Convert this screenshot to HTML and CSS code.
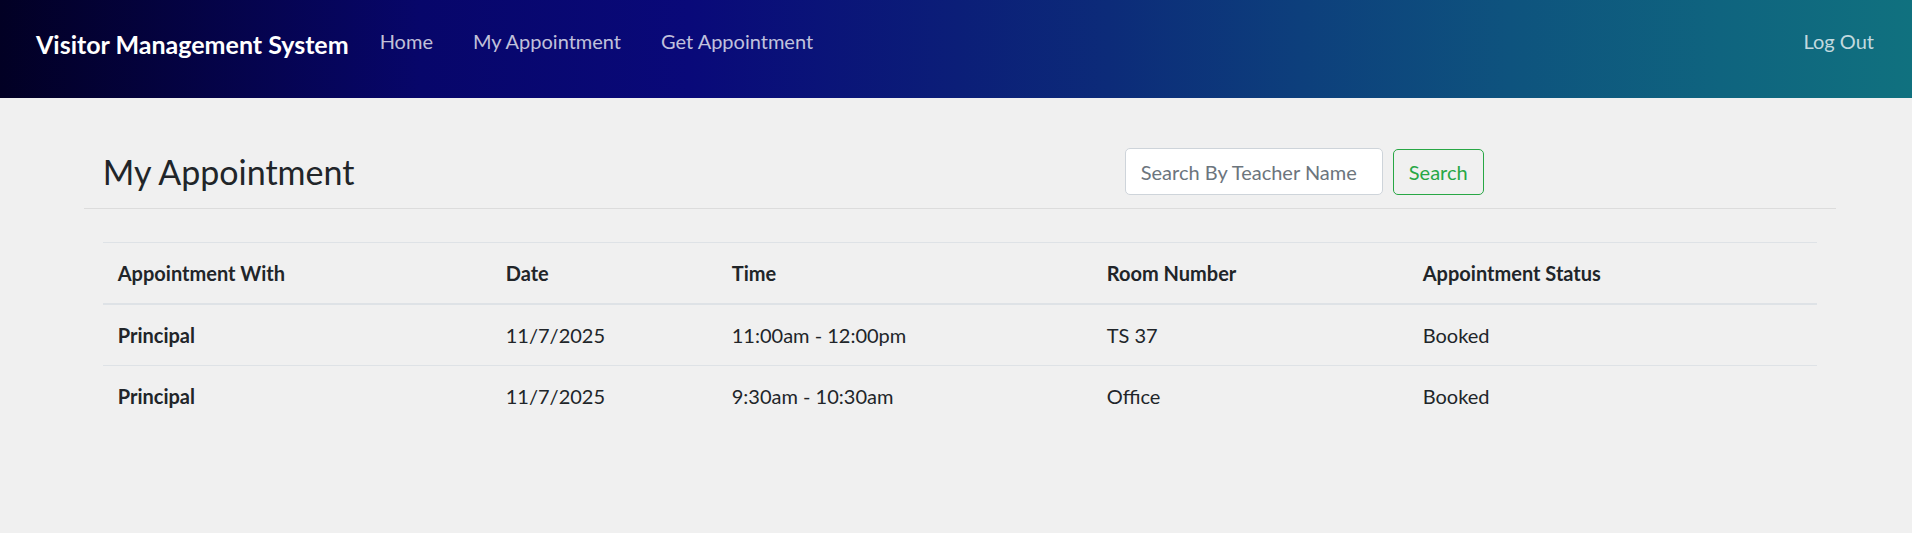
FILE: index.html
```html
<!DOCTYPE html>
<html lang="en">
<head>
<meta charset="utf-8">
<title>My Appointment - Visitor Management System</title>
<link rel="stylesheet" href="styles.css">
</head>
<body>
<nav class="navbar">
  <a class="brand" href="#">Visitor Management System</a>
  <ul class="nav-links">
    <li><a href="#">Home</a></li>
    <li><a href="#">My Appointment</a></li>
    <li><a href="#">Get Appointment</a></li>
  </ul>
  <a class="logout" href="#">Log Out</a>
</nav>
<main class="content">
  <div class="title-row">
    <div class="title-col"><h3 class="page-title">My Appointment</h3></div>
    <div class="search-col">
      <form class="search">
        <input class="search-input" type="text" placeholder="Search By Teacher Name">
        <button class="search-btn" type="button">Search</button>
      </form>
    </div>
  </div>
  <hr class="divider">
  <div class="table-wrap">
    <table class="appt-table">
      <colgroup>
        <col class="c-with"><col class="c-date"><col class="c-time"><col class="c-room"><col class="c-status">
      </colgroup>
      <thead>
        <tr>
          <th>Appointment With</th>
          <th>Date</th>
          <th>Time</th>
          <th>Room Number</th>
          <th>Appointment Status</th>
        </tr>
      </thead>
      <tbody>
        <tr>
          <th>Principal</th>
          <td>11/7/2025</td>
          <td>11:00am - 12:00pm</td>
          <td>TS 37</td>
          <td>Booked</td>
        </tr>
        <tr>
          <th>Principal</th>
          <td>11/7/2025</td>
          <td>9:30am - 10:30am</td>
          <td>Office</td>
          <td>Booked</td>
        </tr>
      </tbody>
    </table>
  </div>
</main>
</body>
</html>
```

FILE: styles.css
```css
* { box-sizing: border-box; }

html, body {
  margin: 0;
  padding: 0;
}

body {
  background: #f0f0f0;
  color: #212529;
  font-family: Lato, "Open Sans", "Liberation Sans", sans-serif;
  font-size: 20px;
  line-height: 30px;
}

a { text-decoration: none; }

/* ---------- navbar ---------- */
.navbar {
  height: 98px;
  display: flex;
  align-items: flex-start;
  padding: 26px 38px 0 36px;
  background: linear-gradient(90deg, #020024 0%, #07066a 22%, #090979 36%, #0b1e78 50%, #0c2b79 58%, #0d3f7c 68%, #0e537e 79%, #0f647f 90%, #10717f 100%);
}

.brand {
  color: #ffffff;
  font-size: 25px;
  line-height: 37.5px;
  font-weight: 700;
  margin-right: 31px;
}

.nav-links {
  list-style: none;
  margin: 0;
  padding: 0;
  display: flex;
  gap: 40px;
}

.nav-links a,
.logout {
  color: rgba(255, 255, 255, 0.75);
  font-size: 20px;
  line-height: 30px;
}

.logout { margin-left: auto; }

/* ---------- content ---------- */
.content {
  width: 1752px;
  margin-left: 84px;
  padding-top: 50px;
}

.title-row {
  display: grid;
  grid-template-columns: 7fr 5fr;
  height: 47px;
}

.title-col,
.search-col {
  padding: 0 18.75px;
  display: flex;
  align-items: center;
}

.page-title {
  margin: 0;
  font-size: 34px;
  line-height: 42px;
  font-weight: 400;
  color: #212529;
}

.search {
  display: flex;
  align-items: center;
  gap: 10px;
  margin: 0;
}

.search-input {
  width: 258px;
  height: 47px;
  padding: 7.5px 15px;
  border: 1px solid #ced4da;
  border-radius: 5px;
  background: #ffffff;
  font-family: inherit;
  font-size: 20px;
  line-height: 30px;
  color: #495057;
}

.search-input::placeholder { color: #6c757d; }

.search-btn {
  width: 91px;
  height: 46px;
  padding: 0;
  border: 1px solid #28a745;
  border-radius: 5px;
  background: transparent;
  color: #28a745;
  font-family: inherit;
  font-size: 20px;
  line-height: 30px;
}

.divider {
  margin: 13px 0 0 0;
  height: 0;
  border: 0;
  border-top: 1px solid #dcdcdc;
}

.table-wrap {
  padding: 0 18.75px;
  margin-top: 33px;
}

.appt-table {
  width: 100%;
  border-collapse: collapse;
  table-layout: fixed;
}

.c-with { width: 388px; }
.c-date { width: 226px; }
.c-time { width: 375px; }
.c-room { width: 316px; }

.appt-table th,
.appt-table td {
  padding: 15px;
  text-align: left;
  vertical-align: top;
  border-top: 1px solid #dee2e6;
  line-height: 30px;
}

.appt-table th { font-weight: 700; }
.appt-table td { font-weight: 400; }

.appt-table thead th { border-bottom: 2px solid #dee2e6; }
```
